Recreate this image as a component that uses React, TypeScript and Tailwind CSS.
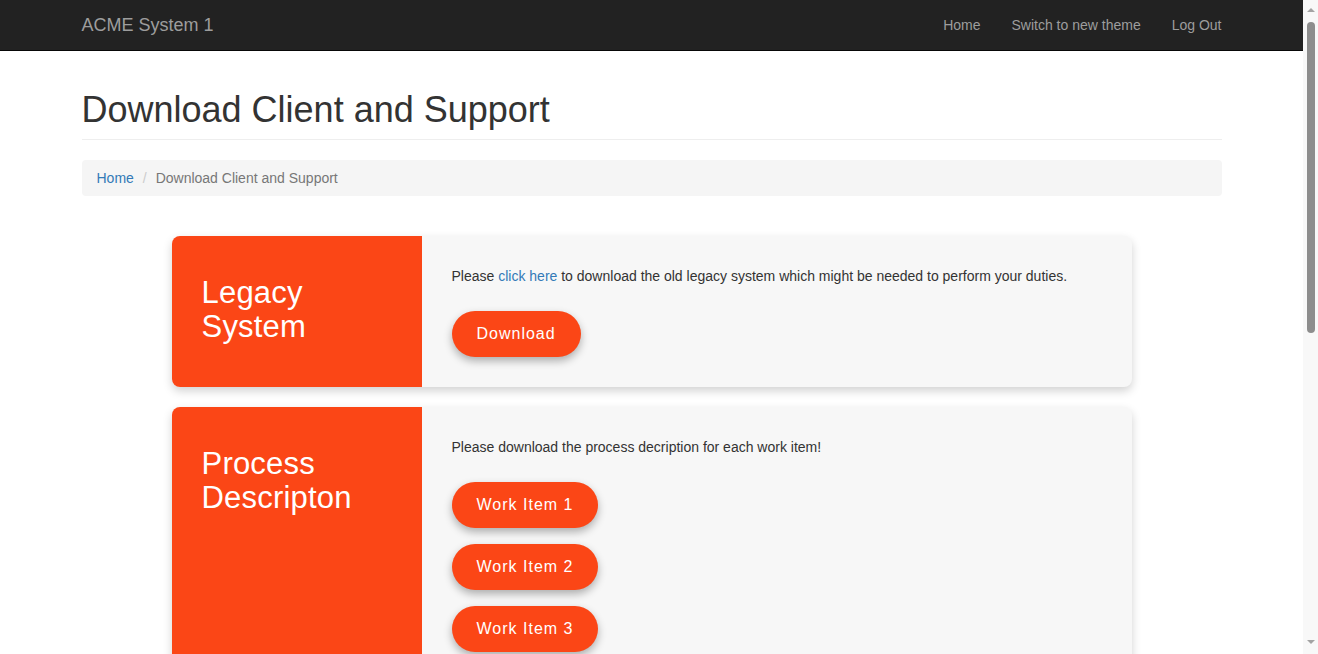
import React from "react";

const ORANGE = "bg-[#fb4616]";

function PillButton({ children }: { children: React.ReactNode }) {
  return (
    <button className="h-[46px] px-[25px] rounded-full bg-[#fb4616] text-white text-[16px] tracking-[1px] leading-none shadow-[0_4px_8px_rgba(0,0,0,0.3)]">
      {children}
    </button>
  );
}

function Card({
  title,
  children,
}: {
  title: React.ReactNode;
  children: React.ReactNode;
}) {
  return (
    <div className="w-[960px] mx-auto flex rounded-[8px] shadow-[0_4px_10px_rgba(0,0,0,0.18)] bg-[#f7f7f7]">
      <div className={`w-[250px] shrink-0 ${ORANGE} rounded-l-[8px] px-[30px] pt-[40px] pb-[30px]`}>
        <h2 className="text-white text-[31px] leading-[34px] font-normal tracking-[0.2px]">{title}</h2>
      </div>
      <div className="flex-1 p-[30px] text-[14px] leading-[20px] text-[#333]">{children}</div>
    </div>
  );
}

export default function App() {
  return (
    <div className="flex h-[654px] w-[1318px] overflow-hidden font-['Liberation_Sans',Arial,sans-serif]">
      <div className="w-[1303px] shrink-0 overflow-hidden bg-white">
        <nav className="h-[51px] bg-[#222] border-b border-[#080808]">
          <div className="w-[1140px] mx-auto h-[50px] flex items-center justify-between">
            <span className="text-[18px] text-[#9d9d9d]">ACME System 1</span>
            <div className="flex gap-[31px] text-[14px] text-[#9d9d9d]">
              <span>Home</span>
              <span>Switch to new theme</span>
              <span>Log Out</span>
            </div>
          </div>
        </nav>
        <div className="w-[1140px] mx-auto pt-[39px]">
          <h1 className="text-[36px] leading-[40px] text-[#333] pb-[9px] border-b border-[#eee]">
            Download Client and Support
          </h1>
          <div className="mt-[20px] bg-[#f5f5f5] rounded-[4px] px-[15px] py-[8px] text-[14px] leading-[20px]">
            <span className="text-[#337ab7]">Home</span>
            <span className="ml-[4px] px-[5px] text-[#ccc]">/{"\u00a0"}</span>
            <span className="text-[#777]">Download Client and Support</span>
          </div>
          <div className="mt-[40px] flex flex-col gap-[20px]">
            <Card
              title={
                <>
                  Legacy
                  <br />
                  System
                </>
              }
            >
              <p>
                Please <span className="text-[#337ab7]">click here</span> to download the old legacy
                system which might be needed to perform your duties.
              </p>
              <div className="mt-[25px] flex flex-col items-start">
                <PillButton>Download</PillButton>
              </div>
            </Card>
            <Card
              title={
                <>
                  Process
                  <br />
                  Descripton
                </>
              }
            >
              <p>Please download the process decription for each work item!</p>
              <div className="mt-[25px] flex flex-col items-start gap-[16px]">
                <PillButton>Work Item 1</PillButton>
                <PillButton>Work Item 2</PillButton>
                <PillButton>Work Item 3</PillButton>
              </div>
            </Card>
          </div>
        </div>
      </div>
      <div className="w-[15px] shrink-0 bg-[#f8f8f8] flex flex-col items-center">
        <div className="mt-[8px] w-0 h-0 border-l-[4px] border-r-[4px] border-b-[4px] border-l-transparent border-r-transparent border-b-[#a3a3a3]" />
        <div className="mt-[10px] w-[8px] h-[311px] rounded-full bg-[#8d8d8d]" />
        <div className="flex-1" />
        <div className="mb-[10px] w-0 h-0 border-l-[4px] border-r-[4px] border-t-[4px] border-l-transparent border-r-transparent border-t-[#a3a3a3]" />
      </div>
    </div>
  );
}
